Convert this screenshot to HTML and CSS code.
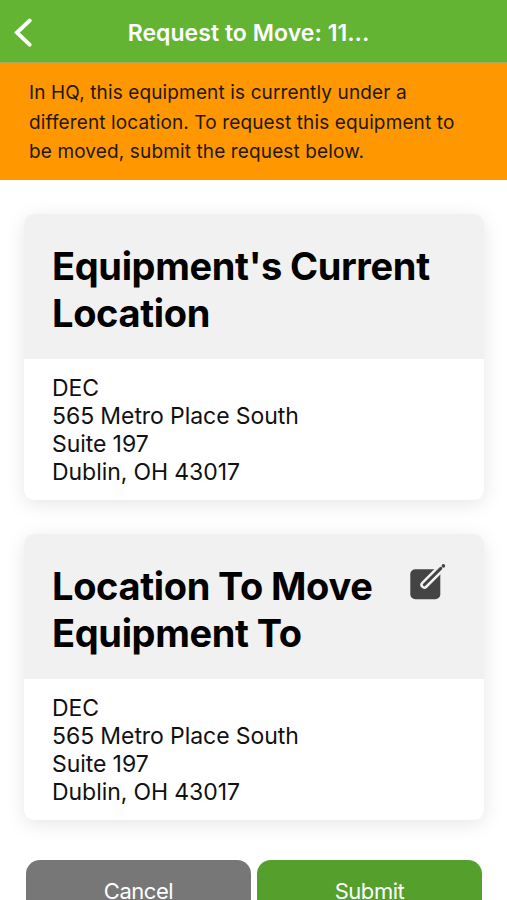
FILE: index.html
```html
<!DOCTYPE html>
<html lang="en">
<head>
<meta charset="utf-8">
<title>Request to Move</title>
<link rel="stylesheet" href="styles.css">
</head>
<body>
<header class="bar">
  <svg class="back" viewBox="0 0 20 30" width="20" height="30"><path d="M16.6 2.6 4 14.6l12.6 12"/></svg>
  <h1 class="title">Request to Move: 11...</h1>
</header>
<p class="notice">In HQ, this equipment is currently under a<br>different location. To request this equipment to<br>be moved, submit the request below.</p>
<main class="content">
  <section class="card">
    <div class="card-head"><h2>Equipment's Current<br>Location</h2></div>
    <address class="card-body">DEC<br>565 Metro Place South<br>Suite 197<br>Dublin, OH 43017</address>
  </section>
  <section class="card">
    <div class="card-head"><h2>Location To Move<br>Equipment To</h2>
      <svg class="edit" viewBox="0 0 38 38" width="38" height="38"><rect class="box" x="2.3" y="6.2" width="30" height="30" rx="5"/><path class="gap" d="M16.3 21.8 34 4.2"/><path class="pen" d="M16.3 21.8 32.8 5.4"/><circle class="box" cx="35.4" cy="2.9" r="1.8"/></svg>
    </div>
    <address class="card-body">DEC<br>565 Metro Place South<br>Suite 197<br>Dublin, OH 43017</address>
  </section>
  <div class="actions"><button class="btn cancel">Cancel</button><button class="btn submit">Submit</button></div>
</main>
</body>
</html>
```
FILE: styles.css
```css
* { box-sizing: border-box; }
body { margin: 0; height: 900px; overflow: hidden; background: #fff; color: #111; font-family: Inter, sans-serif; }
.bar { height: 63px; display: flex; align-items: center; background: #62b432; border-bottom: 1px solid #a9ab5c; padding: 3px 14px 0 13px; }
.back { fill: none; stroke: #fff; stroke-width: 4; stroke-linecap: round; }
.title { flex: 1; margin: 0 29px 0 0; text-align: center; color: #fff; font-size: 23px; font-weight: 600; letter-spacing: .05px; }
.notice { margin: 0; height: 117px; padding: 15px 29px 13px; background: #ff9800; font-size: 19px; line-height: 29.5px; letter-spacing: .13px; white-space: nowrap; color: #24170a; }
.content { padding: 34px 23px 0 24px; }
.card { height: 286px; margin-bottom: 34px; border-radius: 10px; overflow: hidden; box-shadow: 0 4px 20px rgba(0,0,0,.1); }
.card-head { height: 145px; padding: 29px 38px 0 28px; background: #f1f1f1; display: flex; justify-content: space-between; }
h2 { margin: 0; font-size: 38px; line-height: 47px; font-weight: 700; letter-spacing: -.35px; word-spacing: -.6px; color: #000; white-space: nowrap; }
.card-body { display: block; padding: 15px 28px; font-size: 23px; line-height: 28px; font-style: normal; letter-spacing: -.05px; word-spacing: -.2px; }
.edit .box { fill: #444; }
.edit .gap { stroke: #f1f1f1; stroke-width: 8; stroke-linecap: round; }
.edit .pen { stroke: #444; stroke-width: 3; stroke-linecap: round; }
.actions { display: flex; gap: 6px; padding: 6px 2px; }
.btn { flex: 1; height: 62px; border: 0; border-radius: 14px; color: #fff; font: 22px Inter, sans-serif; letter-spacing: -.45px; }
.cancel { background: #777; }
.submit { background: #55a02c; }
```
